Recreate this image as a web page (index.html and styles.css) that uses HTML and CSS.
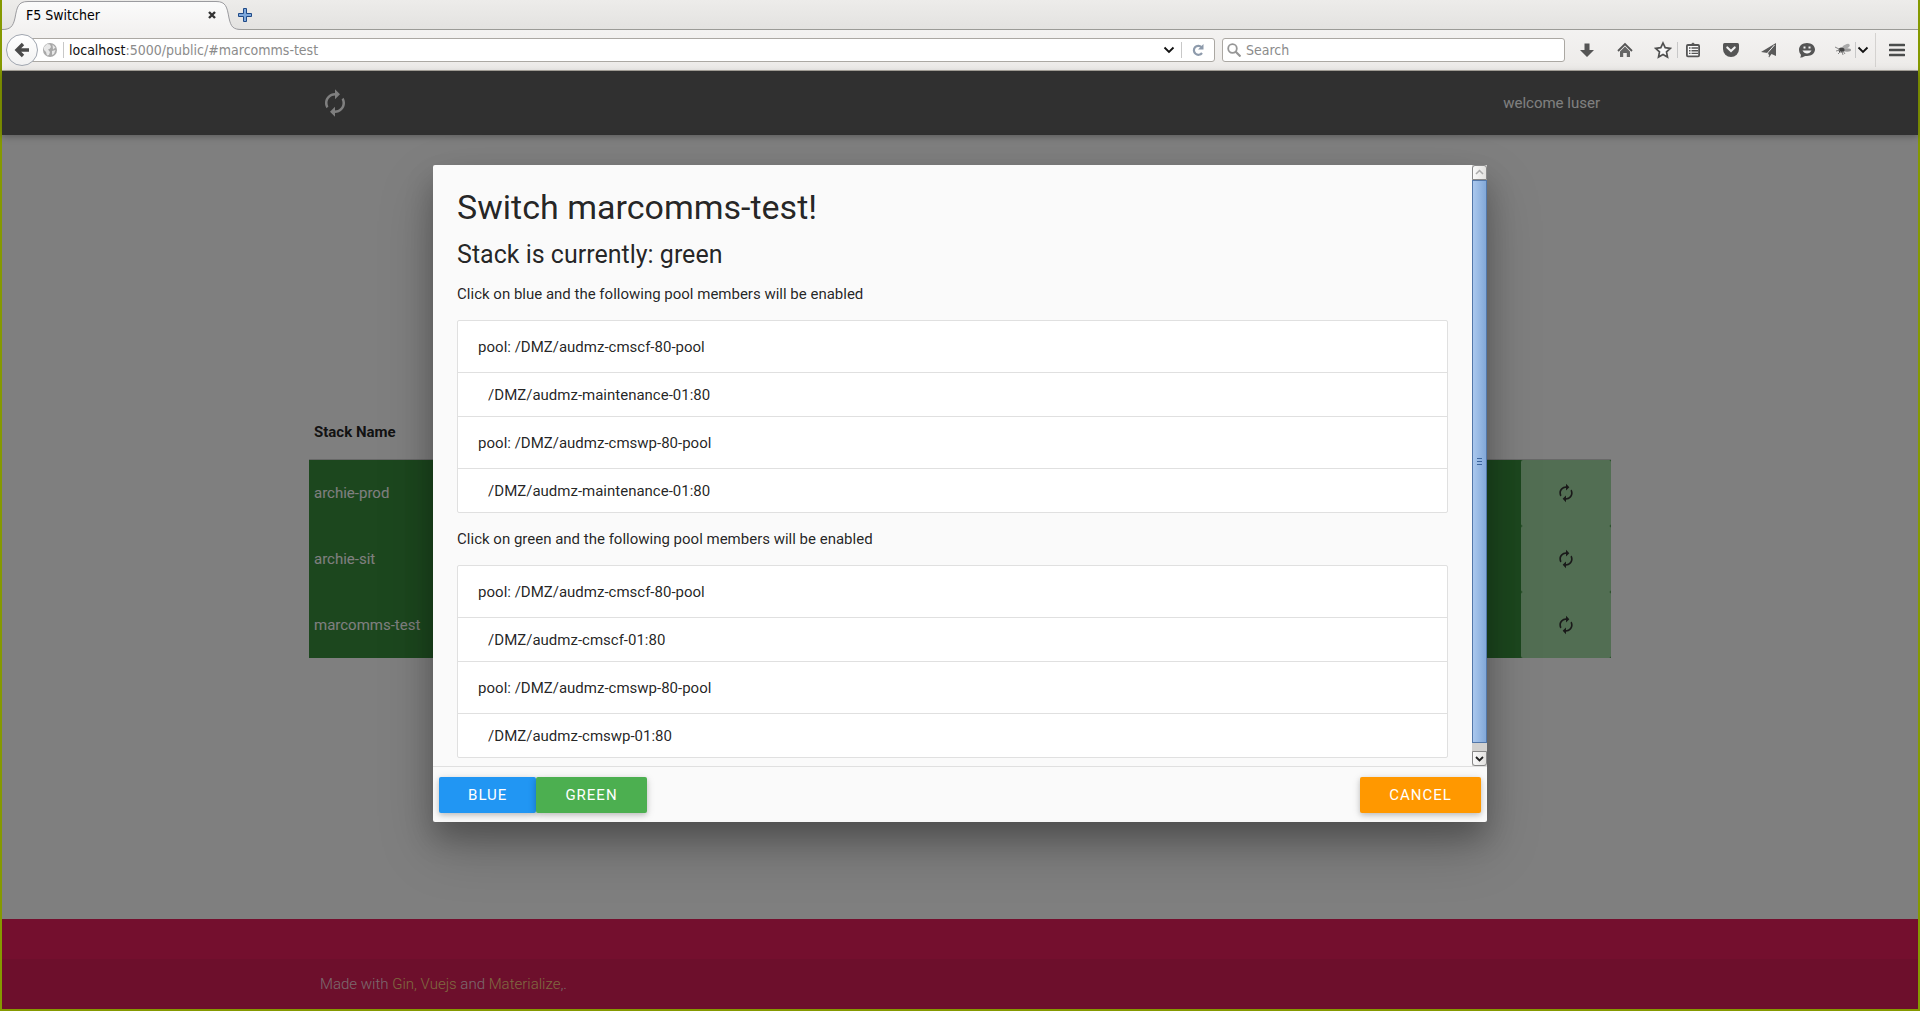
FILE: index.html
```html
<!DOCTYPE html>
<html lang="en">
<head>
<meta charset="utf-8">
<title>F5 Switcher</title>
<link rel="stylesheet" href="styles.css">
</head>
<body>
<svg class="defs" aria-hidden="true">
  <symbol id="sync" viewBox="0 0 24 24"><path d="M12 6v3l4-4-4-4v3c-4.420 0-8 3.580-8 8 0 1.570.460 3.030 1.240 4.260L6.700 14.800C6.250 13.970 6 13.010 6 12c0-3.310 2.690-6 6-6zm6.760 1.740L17.300 9.200c.440.840.700 1.790.700 2.800 0 3.310-2.690 6-6 6v-3l-4 4 4 4v-3c4.420 0 8-3.580 8-8 0-1.570-.460-3.030-1.240-4.260z"/></symbol>
</svg>
<div class="window">
  <header class="chrome">
    <div class="tabs">
      <div class="tab">
        <svg class="tab-shape" viewBox="0 0 240 30" aria-hidden="true"><defs><linearGradient id="tg" x2="0" y2="1"><stop offset="0" stop-color="#fbfbfb"/><stop offset="1" stop-color="#f3f2f1"/></linearGradient></defs><path d="M0 30v-.500C8 29.500 11 27 13 18C15 7 16 1.500 26 1.500H214C224 1.500 225 7 227 18C229 27 231 29.500 240 29.500V30z" fill="url(#tg)"/><path d="M0 29.500C8 29.500 11 27 13 18C15 7 16 1.500 26 1.500H214C224 1.500 225 7 227 18C229 27 231 29.500 240 29.500" fill="none" stroke="#9b9b9f"/></svg>
        <span class="tab-title">F5 Switcher</span>
        <button class="bare" aria-label="Close tab"><svg width="10" height="10" viewBox="0 0 10 10"><path d="M2 2l6 6M8 2L2 8" stroke="#333" stroke-width="2.400"/></svg></button>
      </div>
      <button class="bare" aria-label="New tab"><svg width="14" height="14" viewBox="0 0 14 14"><path d="M5.500.500h3v5h5v3h-5v5h-3v-5h-5v-3h5z" fill="#7fa9dc" stroke="#204a87"/></svg></button>
    </div>
    <div class="toolbar">
      <button class="back" aria-label="Back"><svg width="16" height="16" viewBox="0 0 16 16"><path d="M9 2L3 8l6 6M3 8h12" fill="none" stroke="#4a4a4a" stroke-width="3.400"/></svg></button>
      <div class="field url">
        <svg width="14" height="14" viewBox="0 0 14 14"><circle cx="7" cy="7" r="7" fill="#a8a8a8"/><path d="M1 4l3-3 3 .500L8 4 6.500 6 5 6.500 7 9l-1 3-2 .500L3 9 1 7zM9.500 1.500l3 3-2.500 2zM9 8l3.500-1-1.500 4-2 1z" fill="#e8e8e8"/></svg>
        <i class="rule"></i>
        <a class="address" href="#marcomms-test"><b>localhost</b>:5000/public/#marcomms-test</a>
        <button class="bare" aria-label="History"><svg width="12" height="12" viewBox="0 0 12 12"><path d="M1.500 3.500L6 8l4.500-4.500" fill="none" stroke="#111" stroke-width="1.800"/></svg></button>
        <i class="rule"></i>
        <button class="bare reload" aria-label="Reload"><svg width="12" height="12" viewBox="0 0 12 12"><path d="M9.500 3A4.500 4.500 0 1 0 10 9" fill="none" stroke="#8d9aab" stroke-width="2.200"/><path d="M11.500 0v5.500H6z" fill="#8d9aab"/></svg></button>
      </div>
      <label class="field search">
        <svg width="14" height="14" viewBox="0 0 14 14"><circle cx="5.500" cy="5.500" r="4.300" fill="none" stroke="#969696" stroke-width="1.800"/><path d="M8.500 8.500l5 5" stroke="#969696" stroke-width="2.200"/></svg>
        <input type="text" placeholder="Search" aria-label="Search">
      </label>
      <nav class="tools" aria-label="Browser tools">
        <button class="tool" aria-label="Downloads"><svg width="16" height="16" viewBox="0 0 16 16"><path d="M5.500 1.500h5V8H15l-7 7-7-7h4.500z" fill="#555"/></svg></button>
        <button class="tool" aria-label="Home"><svg width="16" height="16" viewBox="0 0 16 16"><path d="M1 9l7-7 7 7" fill="none" stroke="#555" stroke-width="1.800"/><path d="M3 9.500l5-5 5 5V15H9.800v-4H6.200v4H3z" fill="#666"/></svg></button>
        <button class="tool" aria-label="Bookmark"><svg width="18" height="18" viewBox="0 0 18 18"><path d="M9 2l2.200 4.700 5.100.600-3.800 3.500 1 5.200L9 13.500 4.500 16l1-5.200L1.700 7.300l5.100-.600z" fill="#f8f8f8" stroke="#505050" stroke-width="1.700"/></svg></button>
        <i class="rule"></i>
        <button class="tool list" aria-label="Bookmarks list"><svg width="16" height="16" viewBox="0 0 16 16"><path d="M5 3l3-2.500L11 3z" fill="#555"/><rect x="1.900" y="3" width="12.200" height="11.300" rx="1" fill="#fafafa" stroke="#555" stroke-width="1.800"/><path d="M4 6h1.500M4 8.700h1.500M4 11.400h1.500M6.500 6H13M6.500 8.700H13M6.500 11.400H13" stroke="#555" stroke-width="1.400"/></svg></button>
        <button class="tool" aria-label="Pocket"><svg width="16" height="16" viewBox="0 0 16 16"><path d="M1.500 1h13Q16 1 16 2.500V7a8 8 0 0 1-16 0V2.500Q0 1 1.500 1z" fill="#555"/><path d="M4.300 5.500L8 9l3.700-3.500" fill="none" stroke="#f2f2f2" stroke-width="2.200" stroke-linecap="round"/></svg></button>
        <button class="tool" aria-label="Share"><svg width="16" height="16" viewBox="0 0 16 16"><path d="M15 1v13l-4.500-2L8 15.500 6.500 11 0 10z" fill="#5a5a5a"/><path d="M13.500 3L6.500 11l1.300 3" fill="none" stroke="#f0f0f0"/></svg></button>
        <button class="tool" aria-label="Chat"><svg width="16" height="16" viewBox="0 0 16 16"><path d="M8 1c4.500 0 8 2.800 8 6.500S12.500 14 8 14c-1.500 0-2 0-3 .500-1 1-2.500 1.300-4 1 1-1 1-2 .800-3C.700 11.500 0 9.500 0 7.500 0 3.800 3.500 1 8 1z" fill="#555"/><path d="M4.500 5.500h2M9.500 5.500h2" stroke="#f2f2f2" stroke-width="1.800"/><path d="M3.500 8.500h9Q11 11.500 8 11.500T3.500 8.500z" fill="#f2f2f2"/></svg></button>
        <button class="tool fly" aria-label="Firebug"><svg width="16" height="16" viewBox="0 0 16 16"><ellipse cx="11" cy="4.500" rx="4" ry="2" transform="rotate(-25 11 4.500)" fill="#aaa"/><ellipse cx="12" cy="8" rx="4" ry="1.700" fill="#999"/><ellipse cx="6.500" cy="8" rx="3" ry="2.500" fill="#444"/><path d="M0 5l4 2M1 9l4-1M3 12l3-3M8 13l-1-4M10 12l-2-3" stroke="#888"/></svg></button>
        <i class="rule"></i>
        <button class="bare" aria-label="More"><svg width="12" height="12" viewBox="0 0 12 12"><path d="M1.500 3.500L6 8l4.500-4.500" fill="none" stroke="#111" stroke-width="1.800"/></svg></button>
        <i class="rule tall"></i>
        <button class="bare" aria-label="Menu"><svg width="16" height="14" viewBox="0 0 16 14"><path d="M1 2h14M1 7h14M1 12h14" stroke="#4b4d4d" stroke-width="2.600" stroke-linecap="round"/></svg></button>
      </nav>
    </div>
  </header>
  <div class="page">
    <nav class="site-nav">
      <div class="container bar">
        <a href="#" class="logo" aria-label="F5 Switcher"><svg width="30" height="30"><use href="#sync"/></svg></a>
        <span>welcome luser</span>
      </div>
    </nav>
    <main class="container">
      <table class="stacks">
        <thead><tr><th>Stack Name</th><th class="action"></th></tr></thead>
        <tbody>
          <tr><td>archie-prod</td><td class="action"><button class="switch" aria-label="Switch archie-prod"><svg width="20" height="20"><use href="#sync"/></svg></button></td></tr>
          <tr><td>archie-sit</td><td class="action"><button class="switch" aria-label="Switch archie-sit"><svg width="20" height="20"><use href="#sync"/></svg></button></td></tr>
          <tr><td>marcomms-test</td><td class="action"><button class="switch" aria-label="Switch marcomms-test"><svg width="20" height="20"><use href="#sync"/></svg></button></td></tr>
        </tbody>
      </table>
    </main>
    <footer class="site-footer">
      <div class="credits"><p class="container">Made with <a href="#">Gin,</a> <a href="#">Vuejs</a> and <a href="#">Materialize</a>,.</p></div>
    </footer>
    <div class="overlay">
      <section class="modal" role="dialog" aria-labelledby="modal-title">
        <div class="modal-body">
          <div class="modal-content">
            <h4 id="modal-title">Switch marcomms-test!</h4>
            <h5>Stack is currently: green</h5>
            <p>Click on blue and the following pool members will be enabled</p>
            <ul class="collection">
              <li class="pool">pool: /DMZ/audmz-cmscf-80-pool</li>
              <li>/DMZ/audmz-maintenance-01:80</li>
              <li class="pool">pool: /DMZ/audmz-cmswp-80-pool</li>
              <li>/DMZ/audmz-maintenance-01:80</li>
            </ul>
            <p>Click on green and the following pool members will be enabled</p>
            <ul class="collection">
              <li class="pool">pool: /DMZ/audmz-cmscf-80-pool</li>
              <li>/DMZ/audmz-cmscf-01:80</li>
              <li class="pool">pool: /DMZ/audmz-cmswp-80-pool</li>
              <li>/DMZ/audmz-cmswp-01:80</li>
            </ul>
          </div>
          <div class="scrollbar" aria-hidden="true">
            <div class="arrow up"><svg width="9" height="9" viewBox="0 0 9 9"><path d="M1 6l3.500-3.500L8 6" fill="none" stroke="#aaa" stroke-width="1.500"/></svg></div>
            <div class="thumb"><i></i><i></i><i></i></div>
            <div class="arrow down"><svg width="9" height="9" viewBox="0 0 9 9"><path d="M1 3l3.500 3.500L8 3" fill="none" stroke="#222" stroke-width="1.800"/></svg></div>
          </div>
        </div>
        <div class="modal-footer">
          <button class="btn blue">BLUE</button>
          <button class="btn green">GREEN</button>
          <button class="btn orange">CANCEL</button>
        </div>
      </section>
    </div>
  </div>
</div>
</body>
</html>
```

FILE: styles.css
```css
* { box-sizing: border-box; }
body { margin: 0; font: 15px/22px Roboto, sans-serif; color: rgba(0,0,0,.87); }
button { font: inherit; border: 0; padding: 0; background: none; cursor: pointer; }
svg { display: block; }
a { text-decoration: none; color: inherit; }
.defs { display: none; }
.window { min-height: 100vh; display: flex; flex-direction: column; border: solid #859900; border-width: 0 2px 2px; }

/* browser chrome */
.chrome { font: 14px/18px "DejaVu Sans Condensed", "DejaVu Sans", sans-serif; color: #000; }
.tabs { display: flex; align-items: center; height: 30px; background: linear-gradient(#edecea, #e3e2e0); box-shadow: inset 0 -1px #9b9b97; }
.tab { position: relative; width: 240px; height: 30px; display: flex; align-items: center; justify-content: space-between; padding: 0 25px 0 24px; }
.tab-shape { position: absolute; inset: 0; width: 240px; height: 30px; }
.tab-title, .tab .bare { position: relative; }
.bare { display: flex; flex: none; }
.tabs > .bare { margin-left: -4px; position: relative; }
.toolbar { display: flex; align-items: center; height: 41px; padding-left: 4px; background: linear-gradient(#f3f2f1, #edebe9); border-bottom: 1px solid #aba79f; }
.back { position: relative; z-index: 1; width: 32px; height: 32px; flex: none; display: grid; place-items: center; border: 1px solid #a0a6b0; border-radius: 50%; background: linear-gradient(#fff, #f2f2f2); }
.field { display: flex; align-items: center; height: 24px; border: 1px solid #aba8a3; border-radius: 3px; background: #fff; }
.url { flex: 1; margin-left: -16px; padding: 0 10px 0 20px; }
.url .rule { margin: 0 5px 0 6px; }
.address { flex: 1; color: #8b8b8b; }
.address b { font-weight: 400; color: #111; }
.reload { margin-left: 5px; }
.rule { width: 1px; height: 16px; background: #c8c8c8; flex: none; }
.search { width: 343px; margin-left: 7px; padding: 0 4px; gap: 5px; }
.search input { flex: 1; min-width: 0; border: 0; padding: 0; background: none; font: inherit; outline: 0; }
.search input::placeholder { color: #8b8b8b; opacity: 1; }
.tools { display: flex; align-items: center; padding: 0 13px; }
.tool { width: 18px; height: 18px; display: grid; place-items: center; margin-right: 20px; }
.tools > .rule { margin-left: -15px; }
.tool.list { margin-left: 6px; }
.fly { margin: 0 18px 0 -2px; }
.tools > .bare { margin-left: 1px; }
.tools > .rule.tall { height: 34px; margin: 0 12px 0 6px; background: #d4d2d0; }

/* application page */
.page { position: relative; flex: 1; display: flex; flex-direction: column; background: #fff; }
.container { width: 90%; max-width: 1280px; margin: 0 auto; }
.site-nav { height: 64px; background: #606060; color: #fff; box-shadow: 0 2px 5px rgba(0,0,0,.16), 0 2px 10px rgba(0,0,0,.12); }
.bar { height: 64px; display: flex; align-items: center; justify-content: space-between; }
.logo svg { fill: #fff; }
main { flex: 1; padding-top: 270px; }
.stacks { width: calc(100% + 22px); margin: 0 -11px; border-collapse: collapse; }
.stacks th { height: 54px; padding: 0 5px; text-align: left; font-weight: 700; border-bottom: 1px solid #d0d0d0; }
.stacks td { height: 66px; padding: 0 5px; background: #388e3c; color: #fff; }
.stacks .action { width: 90px; padding: 0; }
.switch { width: 90px; height: 66px; display: grid; place-items: center; border-radius: 2px; background: #a5dca6; }
.switch svg { fill: #343434; }
.site-footer { padding-top: 40px; background: #e91e5c; }
.credits { height: 50px; background: rgba(51,51,51,.08); color: rgba(255,255,255,.8); font-weight: 300; line-height: 50px; }
.credits a { color: #ffd180; }

/* dialog */
.overlay { position: absolute; inset: 0; padding-top: 94px; background: rgba(0,0,0,.5); }
.modal { width: 55%; margin: 0 auto; border-radius: 2px; background: #fafafa; box-shadow: 0 16px 28px rgba(0,0,0,.22), 0 25px 55px rgba(0,0,0,.21); }
.modal-body { display: flex; }
.modal-content { flex: 1; padding: 24px 24px 8px; }
h4, h5 { margin: 0; font-weight: 400; }
h4 { font-size: 34px; line-height: 36px; margin-bottom: 16px; }
h5 { font-size: 25px; line-height: 28px; margin-bottom: 14px; }
p { margin: 0; }
.collection { list-style: none; margin: 15px 0; padding: 0; border: 1px solid #e0e0e0; border-radius: 2px; background: #fff; }
.collection:last-child { margin-bottom: 0; }
.collection li { height: 44px; padding: 11px 30px; border-bottom: 1px solid #e0e0e0; }
.collection .pool { height: 52px; padding: 15px 20px; }
.collection li:last-child { height: 43px; border-bottom: 0; }
.scrollbar { width: 15px; display: flex; flex-direction: column; background: #d2d1cf; }
.arrow { height: 15px; display: grid; place-items: center; border: 1px solid #888; border-radius: 3px 3px 0 0; background: linear-gradient(90deg, #fafafa, #e2e1df); }
.down { border-radius: 0 0 3px 3px; }
.thumb { flex: 1; margin-bottom: 8px; display: flex; flex-direction: column; align-items: center; justify-content: center; gap: 2px; border: 1px solid #5377a8; background: linear-gradient(90deg, #aac8ee, #82a8d8); }
.thumb i { width: 5px; height: 1px; background: #3c659c; }
.modal-footer { display: flex; height: 56px; padding: 10px 6px; border-top: 1px solid #e0e0e0; }
.btn { height: 36px; padding: 0 29px; border-radius: 2px; color: #fff; letter-spacing: 1px; box-shadow: 0 2px 5px rgba(0,0,0,.16), 0 2px 10px rgba(0,0,0,.12); }
.blue { background: #2196f3; }
.green { background: #4caf50; }
.orange { background: #ff9800; margin-left: auto; }
```
